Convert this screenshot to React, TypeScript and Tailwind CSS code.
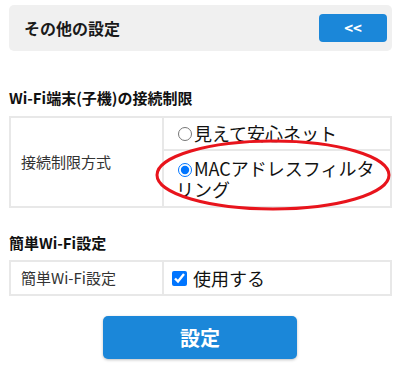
import React from "react";

const font = { fontFamily: '"Noto Sans CJK JP", "Noto Sans", sans-serif' };

const App = () => {
  return (
    <div
      className="relative h-[381px] w-[400px] overflow-hidden bg-white pl-[9px] pr-[8px] pt-[5px] text-[#111]"
      style={font}
    >
      {/* Header */}
      <div className="flex h-[46px] items-center justify-between rounded-[5px] bg-[#f0f0f0] pl-[15px] pr-[5px]">
        <span className="text-[16px] font-bold leading-[22px] text-[#1a1a1a]">その他の設定</span>
        <button className="flex h-[28px] w-[68px] items-center justify-center rounded-[4px] bg-[#1b87d9] text-[15px] font-bold text-white">
          &lt;&lt;
        </button>
      </div>

      {/* Connection limit */}
      <h2 className="mt-[36px] text-[15px] font-bold leading-[22px]">Wi-Fi端末(子機)の接続制限</h2>
      <table className="mt-[7px] w-full border-collapse">
        <tbody>
          <tr className="h-[33px]">
            <td
              rowSpan={2}
              className="w-[153px] border-2 border-[#e8e8e8] pl-[10px] text-[15px] leading-[20px] text-[#333]"
            >
              接続制限方式
            </td>
            <td className="border-2 border-[#e8e8e8] pl-[12px] pr-[6px] text-[18px] leading-[21px]">
              <label className="flex items-center">
                <input type="radio" name="mode" className="m-0 ml-[2px] mr-[2px] h-[14px] w-[14px]" />
                見えて安心ネット
              </label>
            </td>
          </tr>
          <tr className="h-[57px]">
            <td className="border-2 border-[#e8e8e8] pl-[12px] pr-[6px] text-[18px] leading-[21px]">
              <label>
                <input
                  type="radio"
                  name="mode"
                  defaultChecked
                  className="m-0 ml-[2px] mr-[2px] h-[14px] w-[14px] align-[-1px]"
                />
                MACアドレスフィルタリング
              </label>
            </td>
          </tr>
        </tbody>
      </table>

      {/* Easy Wi-Fi */}
      <h2 className="mt-[24px] text-[15px] font-bold leading-[22px]">簡単Wi-Fi設定</h2>
      <table className="mt-[6px] w-full border-collapse">
        <tbody>
          <tr className="h-[34px]">
            <td className="w-[153px] border-2 border-[#e8e8e8] pl-[10px] text-[15px] leading-[20px] text-[#333]">
              簡単Wi-Fi設定
            </td>
            <td className="border-2 border-[#e8e8e8] pl-[8px] text-[18px] leading-[21px]">
              <label className="flex items-center">
                <input type="checkbox" defaultChecked className="m-0 mr-[6px] h-[15px] w-[15px]" />
                使用する
              </label>
            </td>
          </tr>
        </tbody>
      </table>

      {/* Submit */}
      <div className="mt-[20px] flex justify-center pr-[1px]">
        <button className="h-[43px] w-[194px] rounded-[5px] bg-[#1b87d9] text-[20px] font-bold text-white shadow-[0_1px_3px_rgba(0,0,0,0.25)]">
          設定
        </button>
      </div>

      {/* Annotation */}
      <svg className="pointer-events-none absolute left-0 top-0" width="400" height="381">
        <ellipse cx="273" cy="175" rx="116" ry="34" fill="none" stroke="#e8141c" strokeWidth="3" />
      </svg>
    </div>
  );
};

export default App;
